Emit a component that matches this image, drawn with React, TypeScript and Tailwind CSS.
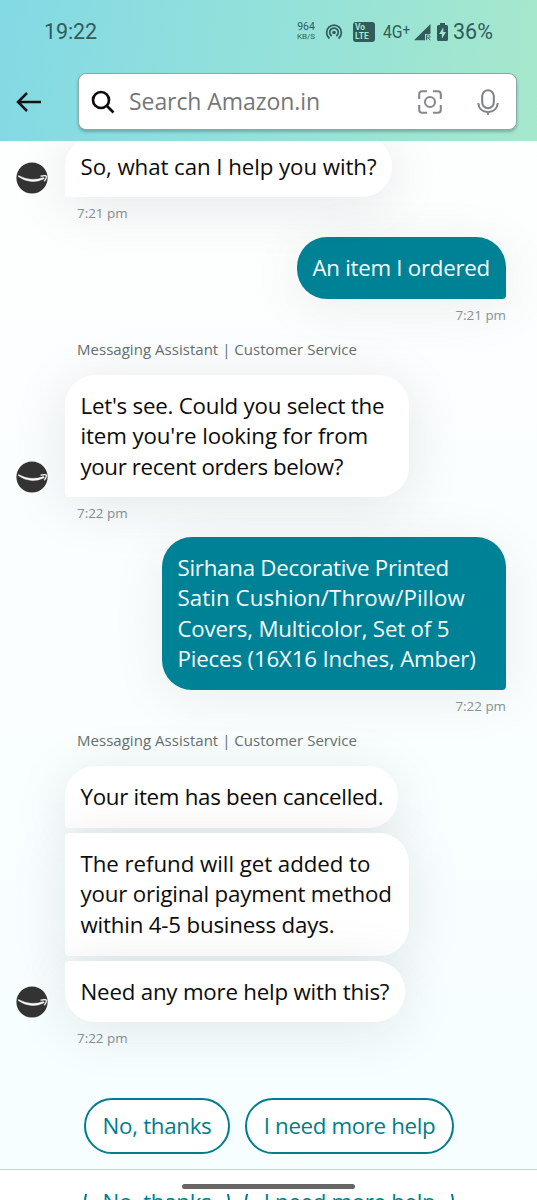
import type { ReactNode } from 'react'

interface Line {
  text: string
  tracking: string
}

function SmileAvatar({ className }: { className: string }) {
  return (
    <svg viewBox="0 0 32 32" className={`absolute left-[-49px] h-8 w-8 ${className}`}>
      <circle cx="16" cy="16" r="15.6" fill="#333333" />
      <path d="M2.4 13.6Q15 20.3 27.6 15.6L28.2 16.8Q15 23.2 2.4 14.6Z" fill="#fff" stroke="#fff" strokeWidth="0.5" strokeLinejoin="round" />
      <path d="M25 14.2Q29.6 13.1 30.4 14.2Q30.5 16.6 28.6 18.9" fill="none" stroke="#fff" strokeWidth="1.2" strokeLinecap="round" />
    </svg>
  )
}

function Lines({ lines }: { lines: Line[] }) {
  return (
    <>
      {lines.map(line => (
        <p key={line.text} className={`whitespace-nowrap ${line.tracking}`}>
          {line.text}
        </p>
      ))}
    </>
  )
}

function AgentBubble({ lines, className }: { lines: Line[]; className: string }) {
  return (
    <div className={`bg-white pt-[15.6px] pl-[15.5px] text-[22.3px] leading-[30.6px] font-[430] text-[#0c0c0c] shadow-[0_8px_56px_rgba(20,30,35,0.10)] ${className}`}>
      <Lines lines={lines} />
    </div>
  )
}

function CustomerBubble({ lines, className }: { lines: Line[]; className: string }) {
  return (
    <div className={`ml-auto mr-[31px] rounded-[30px] rounded-br-[4px] bg-[#008296] pt-[15.6px] pl-[15.5px] text-[22.3px] leading-[30.6px] font-[430] text-[#f7feff] shadow-[0_8px_56px_rgba(20,30,35,0.07)] ${className}`}>
      <Lines lines={lines} />
    </div>
  )
}

function AgentLabel() {
  return (
    <p className="ml-[77px] h-5 text-[15px] leading-[19px] whitespace-nowrap tracking-[0.03px] text-[#667071]">
      Messaging Assistant | Customer Service
    </p>
  )
}

function Time({ children, className }: { children: ReactNode; className: string }) {
  return <p className={`h-5 text-[13.4px] leading-5 text-[#879294] ${className}`}>{children}</p>
}

function QuickReplies() {
  return (
    <div className="ml-[84px] flex gap-[15px] text-[22.3px] font-[430] text-[#007d8c]">
      <button className="h-14 w-[146px] rounded-full border-2 border-[#007d8c] bg-white pb-px whitespace-nowrap tracking-[-0.3px]">
        No, thanks
      </button>
      <button className="h-14 w-[209px] rounded-full border-2 border-[#007d8c] bg-white pb-px whitespace-nowrap tracking-[-0.35px]">
        I need more help
      </button>
    </div>
  )
}

function StatusBar() {
  return (
    <div className="flex h-[64px] items-center pr-[45px] pl-[44px] font-[Roboto,sans-serif] text-[#315c5b]">
      <span className="text-[21.5px] leading-6 tracking-[-0.1px]">19:22</span>
      <div className="ml-auto flex items-center">
        <div className="w-[20px] text-center">
          <p className="text-[10.5px] leading-[10px]">964</p>
          <p className="text-[8px] leading-[10px]">KB/S</p>
        </div>
        <svg viewBox="0 0 18 18" className="ml-[9px] h-[18px] w-[18px]" fill="none" stroke="currentColor" strokeWidth="1.7" strokeLinecap="round">
          <circle cx="9" cy="9.5" r="1.8" fill="currentColor" stroke="none" />
          <path d="M6.3 12.7a4.3 4.3 0 1 1 5.4 0" />
          <path d="M4 15a7.4 7.4 0 1 1 10 0" />
        </svg>
        <div className="ml-[10px] h-5 w-[22px] rounded-[3px] bg-[#315c5b] pl-[2px] pt-[1px] text-[8.5px] leading-[9px] font-bold text-[#a0e5d6]">
          <p>Vo</p>
          <p>LTE</p>
        </div>
        <span className="ml-[8px] w-[25px] origin-left scale-x-90 text-[17.5px] leading-6 whitespace-nowrap">
          4G<span className="relative -top-[3px] text-[15px]">+</span>
        </span>
        <svg viewBox="0 0 17 17" className="ml-[6px] h-[17px] w-[17px]">
          <path d="M16.5 0v10H11v6.2H0z" fill="currentColor" />
          <path d="M12.5 16.2v-5h2q1.5 0 1.5 1.3t-1.5 1.3h-2M14.3 13.8l1.8 2.4" fill="none" stroke="currentColor" strokeWidth="0.9" />
        </svg>
        <svg viewBox="0 0 11 18" className="ml-[6px] h-[18px] w-[11px]">
          <path fillRule="evenodd" d="M3 0h5v2h1.5Q11 2 11 3.5v13Q11 18 9.5 18h-8Q0 18 0 16.5v-13Q0 2 1.5 2H3zM6.3 4.3 2.2 11h2.7v4.7L9 9H6.3z" fill="currentColor" />
        </svg>
        <span className="ml-[5px] w-[39px] text-[21.5px] leading-6 whitespace-nowrap">36%</span>
      </div>
    </div>
  )
}

function SearchHeader() {
  return (
    <header className="relative z-10 h-[141px] bg-[linear-gradient(97deg,#83d9e4_0%,#93e1da_50%,#a6e8cc_100%)]">
      <StatusBar />
      <div className="flex items-center pt-[9px] pl-[16px]">
        <svg viewBox="0 0 26 20" className="h-5 w-[26px]" fill="none" stroke="#0d1515" strokeWidth="2.5">
          <path d="M11 1 2 10l9 9M2 10h23" />
        </svg>
        <div className="ml-[36px] flex h-[57px] w-[439px] items-center rounded-[8px] border border-[#8aa9a8] bg-white shadow-[0_2px_3px_rgba(40,80,80,0.35)]">
          <svg viewBox="0 0 24 24" className="ml-[12px] h-6 w-6" fill="none" stroke="#0d0d0d" strokeWidth="2.7">
            <circle cx="10" cy="10" r="8" />
            <path d="m15.5 15.5 7 7" />
          </svg>
          <span className="ml-[14px] w-[200px] pb-px text-[23px] leading-8 whitespace-nowrap tracking-[-0.07px] text-[#747778]">Search Amazon.in</span>
          <svg viewBox="0 0 24 24" className="ml-[89px] h-6 w-6" fill="none" stroke="#85898a" strokeWidth="2.1">
            <path d="M1.2 9V4.2q0-3 3-3H9M15 1.2h4.8q3 0 3 3V9M22.8 15v4.8q0 3-3 3H15M9 22.8H4.2q-3 0-3-3V15" />
            <circle cx="12" cy="12" r="5" />
          </svg>
          <svg viewBox="0 0 22 26" className="ml-[35px] h-[26px] w-[22px]" fill="none" stroke="#7f8588" strokeWidth="2.1">
            <rect x="5.2" y="1.2" width="11.6" height="18" rx="5.8" />
            <path d="M1.2 14q1 9 9.8 9t9.8-9M11 23v2.8" />
          </svg>
        </div>
      </div>
    </header>
  )
}

export default function App() {
  return (
    <div className="relative h-[1200px] w-[537px] overflow-hidden bg-[#fafefe] font-['Open_Sans','Noto_Sans',sans-serif]">
      <SearchHeader />
      <main className="h-[1028px] overflow-hidden bg-[linear-gradient(180deg,#fdfefe_0%,#fafeff_50%,#f6feff_100%)]">
        <div className="relative mt-[-5px] ml-[65px]">
          <AgentBubble
            className="h-[61px] w-[327px] rounded-[30px] rounded-bl-[4px]"
            lines={[{ text: 'So, what can I help you with?', tracking: 'tracking-[-0.08px]' }]}
          />
          <SmileAvatar className="bottom-[3px]" />
        </div>
        <Time className="mt-[6px] ml-[77px]">7:21 pm</Time>

        <CustomerBubble
          className="mt-[14px] h-[62px] w-[209px]"
          lines={[{ text: 'An item I ordered', tracking: 'tracking-[-0.28px]' }]}
        />
        <Time className="mt-[6px] mr-[31px] text-right">7:21 pm</Time>

        <div className="mt-[15px]">
          <AgentLabel />
        </div>
        <div className="relative mt-[15px] ml-[65px]">
          <AgentBubble
            className="h-[122px] w-[344px] rounded-[30px] rounded-bl-[4px]"
            lines={[
              { text: "Let's see. Could you select the", tracking: 'tracking-[-0.23px]' },
              { text: "item you're looking for from", tracking: 'tracking-[-0.12px]' },
              { text: 'your recent orders below?', tracking: 'tracking-[-0.37px]' },
            ]}
          />
          <SmileAvatar className="bottom-[4px]" />
        </div>
        <Time className="mt-[6px] ml-[77px]">7:22 pm</Time>

        <CustomerBubble
          className="mt-[14px] h-[153px] w-[344px]"
          lines={[
            { text: 'Sirhana Decorative Printed', tracking: 'tracking-[-0.26px]' },
            { text: 'Satin Cushion/Throw/Pillow', tracking: 'tracking-[0.07px]' },
            { text: 'Covers, Multicolor, Set of 5', tracking: 'tracking-[-0.19px]' },
            { text: 'Pieces (16X16 Inches, Amber)', tracking: 'tracking-[-0.17px]' },
          ]}
        />
        <Time className="mt-[6px] mr-[31px] text-right">7:22 pm</Time>

        <div className="mt-[15px]">
          <AgentLabel />
        </div>
        <div className="relative mt-[15px] ml-[65px] flex flex-col gap-[5px]">
          <AgentBubble
            className="h-[62px] w-[333px] rounded-[30px] rounded-bl-[4px]"
            lines={[{ text: 'Your item has been cancelled.', tracking: 'tracking-[-0.28px]' }]}
          />
          <AgentBubble
            className="h-[123px] w-[344px] rounded-l-[4px] rounded-r-[30px]"
            lines={[
              { text: 'The refund will get added to', tracking: 'tracking-[-0.06px]' },
              { text: 'your original payment method', tracking: 'tracking-[-0.18px]' },
              { text: 'within 4-5 business days.', tracking: 'tracking-[-0.19px]' },
            ]}
          />
          <AgentBubble
            className="h-[61px] w-[340px] rounded-[30px] rounded-tl-[4px]"
            lines={[{ text: 'Need any more help with this?', tracking: 'tracking-[-0.21px]' }]}
          />
          <SmileAvatar className="bottom-[4px]" />
        </div>
        <Time className="mt-[6px] ml-[77px]">7:22 pm</Time>

        <div className="mt-[50px]">
          <QuickReplies />
        </div>
      </main>

      <footer className="relative h-[31px] border-t border-[#c5ced1] bg-white">
        <div className="mt-[24px] h-[6px] overflow-hidden">
          <div className="-mt-[20px]">
            <QuickReplies />
          </div>
        </div>
        {/* gesture handle */}
        <div className="absolute top-[14px] left-[182px] h-[5px] w-[173px] rounded-full bg-[#656565]" />
      </footer>
    </div>
  )
}
